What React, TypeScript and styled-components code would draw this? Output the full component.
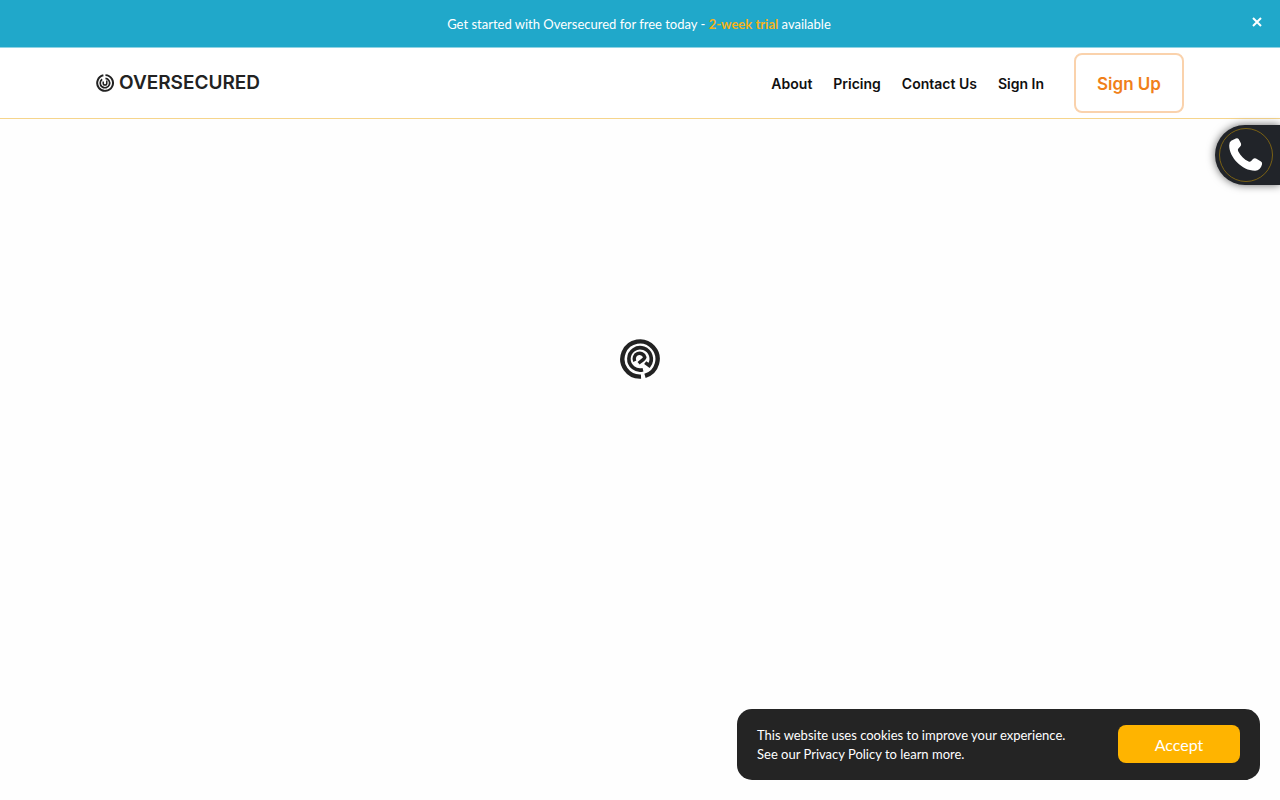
import React from "react";
import styled, { createGlobalStyle } from "styled-components";

const GlobalStyle = createGlobalStyle`
  *, *::before, *::after { box-sizing: border-box; }
  body {
    margin: 0;
    background: #fefefe;
    color: #101010;
    font-family: Lato, "Liberation Sans", sans-serif;
  }
  button { font: inherit; cursor: pointer; }
`;

const Page = styled.div`
  min-height: 100vh;
  display: flex;
  flex-direction: column;
`;

const Banner = styled.div`
  display: flex;
  align-items: center;
  padding: 0 16px;
  height: 48px;
  background: #20a8ca;
  border-bottom: 1px solid #8fd3e4;
  color: #fff;
`;

const BannerText = styled.p`
  flex: 1;
  margin: 0;
  padding-left: 12px;
  text-align: center;
  font-size: 13px;
  line-height: 20px;

  strong { color: #f5b21a; font-weight: 700; }
`;

const CloseButton = styled.button`
  display: flex;
  padding: 0 0 3px;
  border: 0;
  background: none;
  color: #fff;
`;

const Header = styled.header`
  display: flex;
  align-items: center;
  justify-content: space-between;
  padding: 5px 96px;
  border-bottom: 1px solid #f6d58c;
  background: #fff;
`;

const Logo = styled.a`
  display: flex;
  align-items: center;
  gap: 5px;
  color: #222;
  text-decoration: none;
  font-family: Inter, sans-serif;
  font-size: 19px;
  font-weight: 600;
  line-height: 20px;
`;

const Nav = styled.nav`
  display: flex;
  align-items: center;
  gap: 21px;
  font-family: Inter, sans-serif;
`;

const NavLink = styled.a`
  color: #101010;
  text-decoration: none;
  font-size: 14px;
  font-weight: 600;
`;

const SignUp = styled.a`
  display: flex;
  align-items: center;
  justify-content: center;
  width: 110px;
  height: 60px;
  margin-left: 9px;
  padding-top: 2px;
  border: 2px solid #fad2ac;
  border-radius: 8px;
  color: #f08019;
  text-decoration: none;
  font-size: 17px;
  font-weight: 600;
`;

const Main = styled.main`
  flex: 1;
  display: flex;
  justify-content: center;
  padding-top: 220px;
`;

const CallTab = styled.a`
  position: fixed;
  top: 125px;
  right: 0;
  display: flex;
  align-items: center;
  width: 65px;
  height: 60px;
  padding-left: 4px;
  border-radius: 30px 0 0 30px;
  background: #212429;
  box-shadow: 0 0 8px rgba(0, 0, 0, 0.6);
`;

const CallRing = styled.span`
  display: flex;
  align-items: center;
  justify-content: center;
  width: 54px;
  height: 54px;
  border: 1px solid #7a6114;
  border-radius: 50%;
`;

const CookieBar = styled.aside`
  position: fixed;
  right: 20px;
  bottom: 20px;
  display: flex;
  align-items: center;
  justify-content: space-between;
  width: 523px;
  max-width: calc(100vw - 40px);
  padding: 15px 20px 16px;
  border-radius: 15px;
  background: #242424;
  color: #fff;
`;

const CookieText = styled.p`
  margin: 0;
  padding-top: 2px;
  font-size: 13px;
  line-height: 19px;

  a { color: inherit; text-decoration: none; }
`;

const AcceptButton = styled.button`
  width: 122px;
  height: 38px;
  padding: 0;
  border: 0;
  border-radius: 8px;
  background: #ffb400;
  color: #fff;
  font-size: 16px;
`;

function Spinner() {
  return (
    <svg width="40" height="40" viewBox="0 0 40 40" fill="none" stroke="#222" role="img" aria-label="Loading">
      <path d="M21 37.6A17.6 17.6 0 1 1 25 36.9" strokeWidth="4.4" />
      <path d="M23 30.7A11.2 11.2 0 1 1 29.2 26.4L25.2 23.6" strokeWidth="3.6" />
      <path d="M14.8 22.2A5.4 5.4 0 1 1 24.8 18.3C24.4 20.3 22 21.4 18.6 24.2" strokeWidth="3.4" />
    </svg>
  );
}

function LogoMark() {
  return (
    <svg width="18" height="18" viewBox="0 0 40 40" fill="none" stroke="#222" aria-hidden="true">
      <path d="M21 2.5A17.5 17.5 0 1 1 16.4 2.9" strokeWidth="4.4" />
      <path d="M21 9.6A10.5 10.5 0 1 1 13.6 11.6" strokeWidth="3.8" />
      <path d="M16 16.4v4a4 4 0 0 0 8 0V14.4" strokeWidth="3.4" />
    </svg>
  );
}

export default function App() {
  const [banner, setBanner] = React.useState(true);
  const [cookies, setCookies] = React.useState(true);
  return (
    <Page>
      <GlobalStyle />
      {banner && (
        <Banner>
          <BannerText>
            Get started with Oversecured for free today - <strong>2-week trial</strong> available
          </BannerText>
          <CloseButton type="button" aria-label="Close" onClick={() => setBanner(false)}>
            <svg width="14" height="14" viewBox="0 0 14 14" stroke="currentColor" strokeWidth="2">
              <path d="M3 3l8 8M11 3l-8 8" />
            </svg>
          </CloseButton>
        </Banner>
      )}
      <Header>
        <Logo href="#"><LogoMark />OVERSECURED</Logo>
        <Nav>
          <NavLink href="#about">About</NavLink>
          <NavLink href="#pricing">Pricing</NavLink>
          <NavLink href="#contact">Contact Us</NavLink>
          <NavLink href="#signin">Sign In</NavLink>
          <SignUp href="#signup">Sign Up</SignUp>
        </Nav>
      </Header>
      <Main><Spinner /></Main>
      <CallTab href="#call" aria-label="Call us">
        <CallRing>
          <svg width="36" height="36" viewBox="0 0 36 36" fill="#fff" aria-hidden="true">
            <path d="M3.2 3.8L7.8 1.4Q9.8.6 10.8 2.3L13 6.6Q13.6 8.4 12.2 9.6L10.4 11.4Q9.4 12.6 10.2 14.2C12.6 18.8 16 22.4 20.6 24.6Q22 25.2 23.2 24L25 22Q26.4 20.8 28 21.6L33 24.4Q34.6 25.6 34 27.4Q32.4 33.4 27.2 33.7C14.5 34 1.2 20.5 1.2 8.5Q1.2 5 3.2 3.8Z" />
          </svg>
        </CallRing>
      </CallTab>
      {cookies && (
        <CookieBar>
          <CookieText>
            This website uses cookies to improve your experience.<br />
            See our <a href="#privacy">Privacy Policy</a> to learn more.
          </CookieText>
          <AcceptButton type="button" onClick={() => setCookies(false)}>Accept</AcceptButton>
        </CookieBar>
      )}
    </Page>
  );
}
